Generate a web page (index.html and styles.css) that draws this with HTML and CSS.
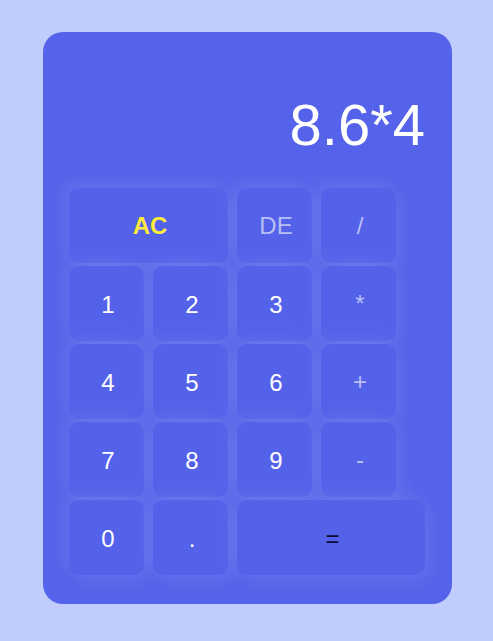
FILE: index.html
```
<!DOCTYPE html>
<html>
<head>
<meta charset="utf-8">
<link rel="stylesheet" href="styles.css">
</head>
<body>
<div class="calc">
  <div class="display">8.6*4</div>
  <div class="keys">
    <span class="key span2 clear">AC</span>
    <span class="key op">DE</span>
    <span class="key op">/</span>
    <span class="key">1</span>
    <span class="key">2</span>
    <span class="key">3</span>
    <span class="key op">*</span>
    <span class="key">4</span>
    <span class="key">5</span>
    <span class="key">6</span>
    <span class="key op">+</span>
    <span class="key">7</span>
    <span class="key">8</span>
    <span class="key">9</span>
    <span class="key op">-</span>
    <span class="key">0</span>
    <span class="key">.</span>
    <span class="key equal">=</span>
  </div>
</div>
</body>
</html>
```
FILE: styles.css
```
html, body {
  margin: 0;
  padding: 0;
}
body {
  background: #c0ccfb;
  font-family: "Liberation Sans", Arial, sans-serif;
  width: 493px;
  height: 641px;
  padding-top: 32px;
  box-sizing: border-box;
}
.calc {
  margin-left: 43px;
  width: 409px;
  height: 572px;
  box-sizing: border-box;
  background: #5563ea;
  border-radius: 20px;
  padding: 0 27px 29px 26px;
  display: flex;
  flex-direction: column;
}
.display {
  height: 156px;
  box-sizing: border-box;
  padding-bottom: 34px;
  display: flex;
  align-items: flex-end;
  justify-content: flex-end;
  color: #fff;
  font-size: 58px;
  line-height: 58px;
}
.keys {
  display: grid;
  grid-template-columns: repeat(4, 75px);
  grid-auto-rows: 75px;
  column-gap: 9px;
  row-gap: 3px;
}
.key {
  display: flex;
  align-items: center;
  justify-content: center;
  box-sizing: border-box;
  padding: 3px 0 0 3px;
  border-radius: 10px;
  background: #5461e9;
  color: #fff;
  font-size: 24px;
  box-shadow: -6px -6px 18px rgba(255,255,255,0.08), 6px 6px 18px rgba(255,255,255,0.08);
}
.span2 {
  grid-column: span 2;
}
.clear {
  padding-top: 1px;
  color: #ffeb3b;
  font-weight: bold;
}
.op {
  padding-top: 1px;
  color: #b7c0f6;
}
.equal {
  grid-column: 3 / span 2;
  width: 188px;
  justify-self: start;
  color: #0b0b36;
}
```
